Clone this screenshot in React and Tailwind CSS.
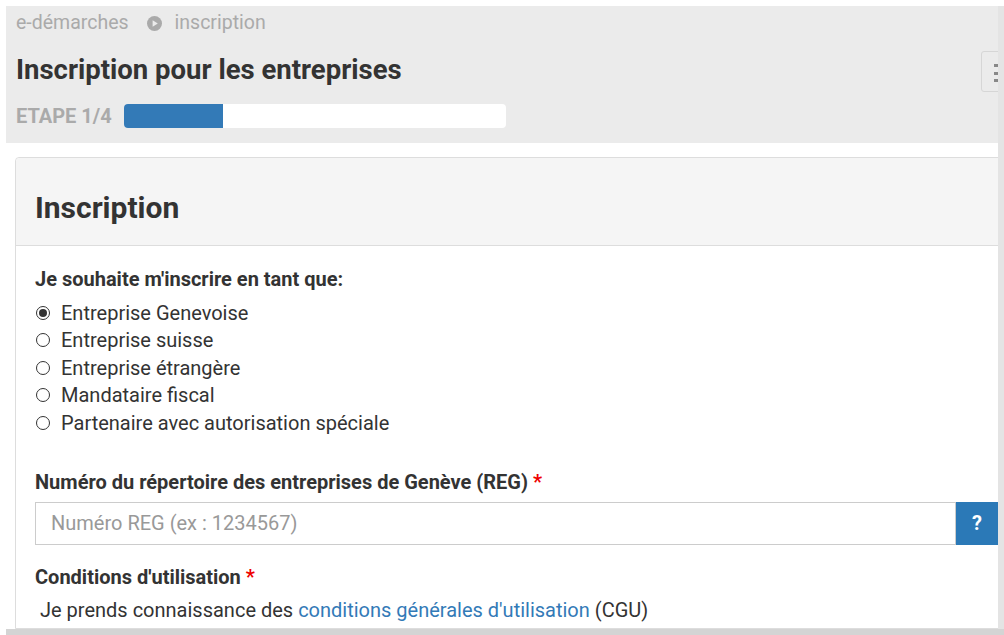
import React, { useState } from 'react';

const options = [
    'Entreprise Genevoise',
    'Entreprise suisse',
    'Entreprise étrangère',
    'Mandataire fiscal',
    'Partenaire avec autorisation spéciale',
];

const Radio = ({ checked }) => (
    <span className="w-[14px] h-[14px] rounded-full border border-[#333] bg-white flex items-center justify-center shrink-0">
        {checked && <span className="w-[8px] h-[8px] rounded-full bg-[#333]"></span>}
    </span>
);

const PlayCircle = () => (
    <svg width="15" height="15" viewBox="0 0 16 16" className="shrink-0">
        <circle cx="8" cy="8" r="8" fill="#aaa" />
        <path d="M6 4.5 L11.5 8 L6 11.5 Z" fill="#ebebeb" />
    </svg>
);

const App = () => {
    const [selected, setSelected] = useState(0);

    return (
        <div className="w-[1004px] h-[635px] bg-white flex flex-col overflow-hidden" style={{ fontFamily: 'Roboto, "Liberation Sans", sans-serif' }}>
            <div className="flex h-[629px]">
                {/* page */}
                <div className="w-[998px] h-[629px] pt-[6px] pl-[6px] overflow-hidden flex flex-col">
                    {/* header */}
                    <div className="bg-[#ebebeb] h-[137px] flex justify-between shrink-0">
                        <div className="pl-[10px] pt-[5px]">
                            <div className="flex items-center h-6 text-[19.5px] text-[#aaa]">
                                <span>e-démarches</span>
                                <span className="ml-[18px] mr-[13px]"><PlayCircle /></span>
                                <span>inscription</span>
                            </div>
                            <h1 className="mt-[19px] h-8 leading-8 text-[27.5px] font-bold text-[#333]">Inscription pour les entreprises</h1>
                            <div className="mt-[18px] flex items-center h-6">
                                <span className="text-[20px] font-bold text-[#aaa] w-[108px]">ETAPE 1/4</span>
                                <div className="w-[382px] h-[24px] bg-white rounded-[4px] overflow-hidden">
                                    <div className="w-[99px] h-full bg-[#337ab7]"></div>
                                </div>
                            </div>
                        </div>
                        <div className="mt-[45px] w-[34px] h-[41px] border border-[#d6d6d6] rounded-[3px] -mr-[17px] pl-[12px] pt-[12px] flex flex-col gap-[4.5px] shrink-0">
                            <span className="h-[3px] w-[16px] bg-[#888]"></span>
                            <span className="h-[3px] w-[16px] bg-[#888]"></span>
                            <span className="h-[3px] w-[16px] bg-[#888]"></span>
                        </div>
                    </div>

                    {/* card */}
                    <div className="mt-[14px] ml-[9px] w-[1000px] border border-[#ddd] rounded-tl-[4px] flex-1">
                        <div className="h-[88px] bg-[#f5f5f5] border-b border-[#ddd] flex items-center pl-[19px] pt-[12px] rounded-tl-[4px]">
                            <h2 className="text-[30px] font-bold text-[#333]">Inscription</h2>
                        </div>
                        <div className="pl-[19px] pt-[21px] text-[#333]">
                            <div className="h-6 leading-6 text-[20px] font-bold">Je souhaite m'inscrire en tant que:</div>
                            <div className="mt-[8px] flex flex-col">
                                {options.map((opt, i) => (
                                    <label key={opt} className="h-[27.5px] flex items-center cursor-pointer" onClick={() => setSelected(i)}>
                                        <span className="ml-[1px]"><Radio checked={selected === i} /></span>
                                        <span className="ml-[11px] text-[20px]">{opt}</span>
                                    </label>
                                ))}
                            </div>

                            <div className="mt-[33px] h-6 leading-6 text-[20px] font-bold">
                                Numéro du répertoire des entreprises de Genève (REG) <span className="text-[#e00]">*</span>
                            </div>
                            <div className="mt-[8px] flex h-[43px] w-[980px]">
                                <input
                                    type="text"
                                    placeholder="Numéro REG (ex : 1234567)"
                                    className="w-[921px] h-full border border-[#ccc] px-[15px] text-[20px] text-[#333] placeholder:text-[#999] outline-none"
                                />
                                <button className="w-[50px] h-full bg-[#2b79b7] text-white font-bold text-[20px] pr-[8px]">?</button>
                            </div>

                            <div className="mt-[20px] h-6 leading-6 text-[20px] font-bold">
                                Conditions d'utilisation <span className="text-[#e00]">*</span>
                            </div>
                            <div className="mt-[9px] ml-[5px] h-6 leading-6 text-[20px]">
                                Je prends connaissance des <a href="#" className="text-[#337ab7]">conditions générales d'utilisation</a> (CGU)
                            </div>
                        </div>
                    </div>
                </div>
                {/* right shadow */}
                <div className="w-[6px] pt-[6px] flex flex-col">
                    <div className="flex-1 bg-[#e4e4e4]"></div>
                </div>
            </div>
            {/* bottom shadow */}
            <div className="h-[6px] pl-[6px] flex">
                <div className="flex-1 bg-[#d4d4d4]"></div>
            </div>
        </div>
    );
};

export default App;
